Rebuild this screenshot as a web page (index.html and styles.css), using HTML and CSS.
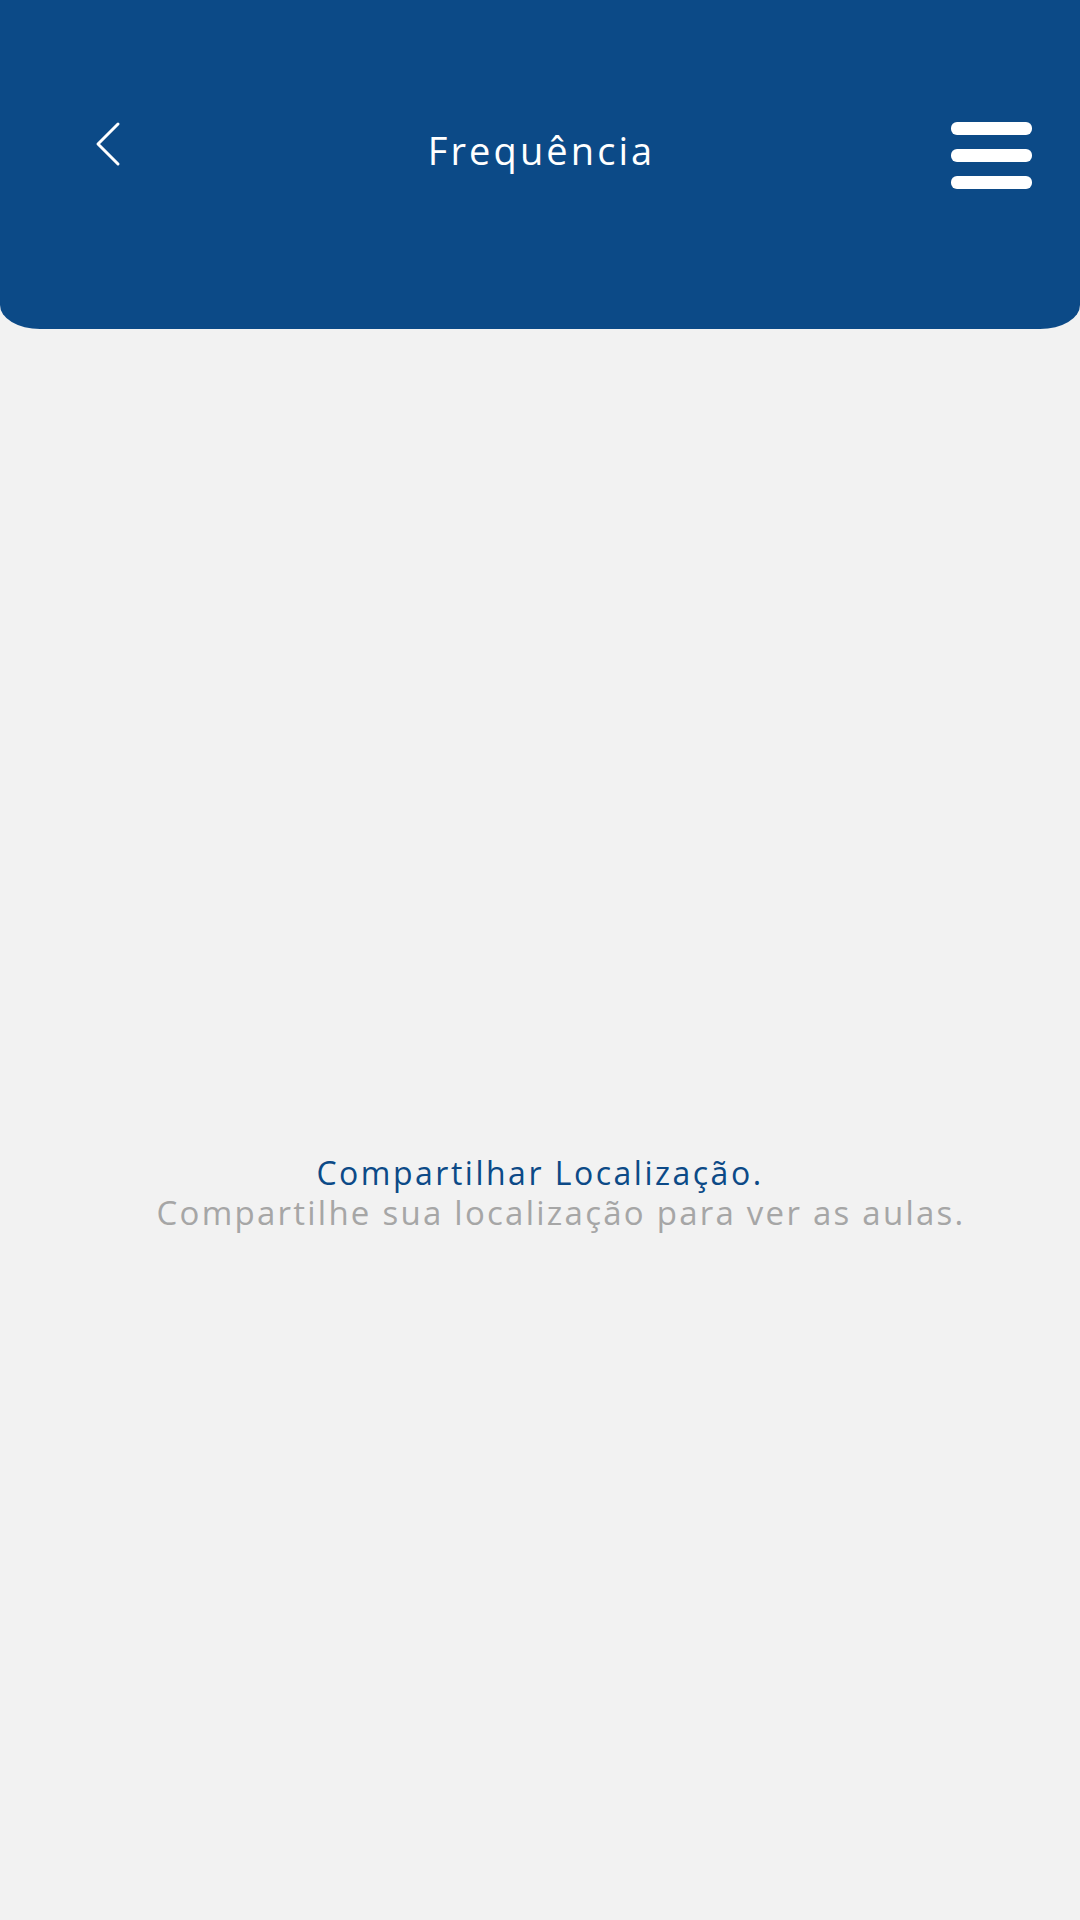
FILE: index.html
```html
<!DOCTYPE html>
<html lang="pt-BR">
<head>
<meta charset="utf-8">
<title>Frequência</title>
<link rel="stylesheet" href="styles.css">
</head>
<body>
<header class="topbar">
  <div class="topbar-left">
    <svg class="back-icon" width="26" height="46" viewBox="0 0 26 46" aria-hidden="true">
      <path d="M23 3 L3 23 L23 43" fill="none" stroke="#ffffff" stroke-width="3" stroke-linecap="round" stroke-linejoin="round"/>
    </svg>
  </div>
  <h1 class="topbar-title">Frequência</h1>
  <div class="topbar-right">
    <svg class="menu-icon" width="81" height="67" viewBox="0 0 81 67" aria-hidden="true">
      <rect x="0" y="0" width="81" height="13" rx="6" fill="#ffffff"/>
      <rect x="0" y="27" width="81" height="13" rx="6" fill="#ffffff"/>
      <rect x="0" y="54" width="81" height="13" rx="6" fill="#ffffff"/>
    </svg>
  </div>
</header>
<main class="content">
  <div class="empty-state">
    <p class="empty-title">Compartilhar Localização.</p>
    <p class="empty-text">Compartilhe sua localização para ver as aulas.</p>
  </div>
</main>
</body>
</html>
```
FILE: styles.css
```css
html, body {
  margin: 0;
  padding: 0;
}
body {
  width: 1080px;
  min-height: 1920px;
  background: #f2f2f2;
  font-family: "Open Sans", "Liberation Sans", sans-serif;
}
.topbar {
  height: 329px;
  box-sizing: border-box;
  background: #0c4a87;
  border-radius: 0 0 40px 40px / 0 0 24px 24px;
  display: grid;
  grid-template-columns: 1fr auto 1fr;
  align-items: start;
  padding: 121px 48px 0 48px;
}
.topbar-left {
  justify-self: start;
  padding-left: 47px;
}
.back-icon {
  display: block;
}
.topbar-title {
  margin: 0;
  margin-top: 4px;
  color: #ffffff;
  font-weight: 400;
  font-size: 38px;
  line-height: 50px;
  letter-spacing: 3.1px;
  text-indent: 3.1px;
}
.topbar-right {
  justify-self: end;
  padding-top: 1px;
}
.menu-icon {
  display: block;
}
.content {
  padding-top: 823px;
}
.empty-state {
  text-align: center;
}
.empty-title {
  margin: 0;
  color: #0c4a87;
  font-size: 32px;
  line-height: 41px;
  letter-spacing: 2.5px;
}
.empty-text {
  margin: 0;
  padding-left: 42px;
  color: #a6a6a6;
  font-size: 33px;
  line-height: 40px;
  letter-spacing: 2.25px;
}
```
